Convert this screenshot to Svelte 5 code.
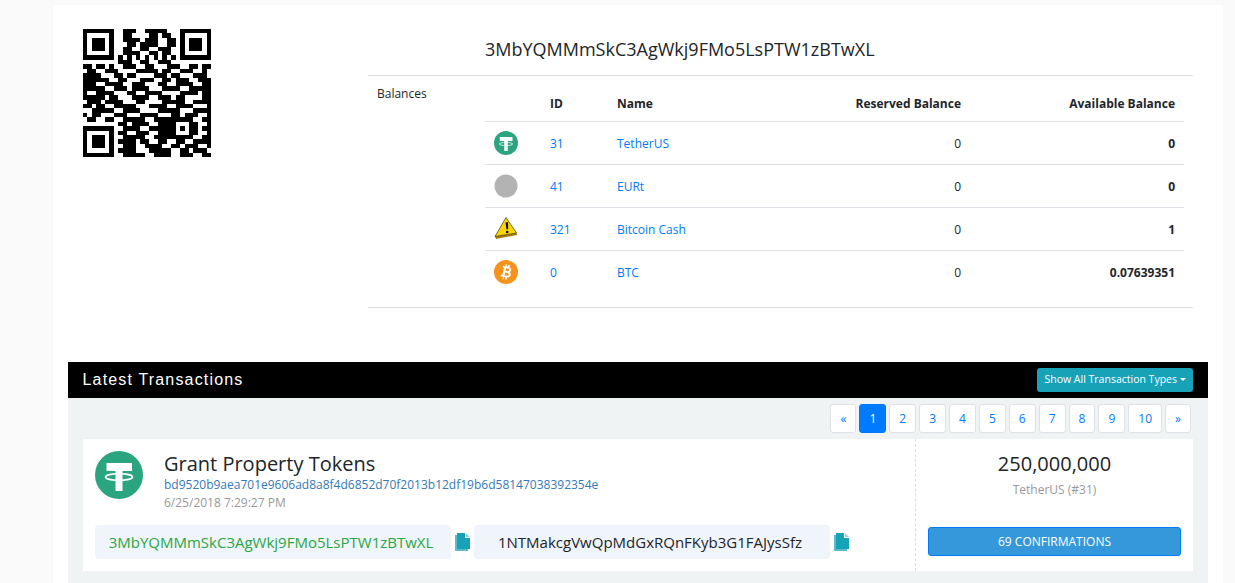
<script lang="ts">
  const rows = [
    { icon: 'tether', id: 31, name: 'TetherUS', reserved: '0', available: '0' },
    { icon: 'none', id: 41, name: 'EURt', reserved: '0', available: '0' },
    { icon: 'warn', id: 321, name: 'Bitcoin Cash', reserved: '0', available: '1' },
    { icon: 'btc', id: 0, name: 'BTC', reserved: '0', available: '0.07639351' }
  ];
  const pages = ['«', '1', '2', '3', '4', '5', '6', '7', '8', '9', '10', '»'];

  const qr = [
    '11111110011100111110001111111',
    '10000010011000011011001000001',
    '10111010011110111001101011101',
    '10111010001101111001101011101',
    '10111010011001100111001011101',
    '10000010011110011011001000001',
    '11111110101010101010101111111',
    '00000000111001100111000000000',
    '11011010011100110001110011011',
    '01100111000011111011001110010',
    '11110001101100001110110001110',
    '11111100110001110011011100111',
    '11100111100111000110011110011',
    '11111001110111100011110011111',
    '10011110001100111100001111011',
    '11111011000111100111011000011',
    '01110111100011000011111001111',
    '11011001111100011110011110001',
    '00111110011110000111110001111',
    '10110001110001111000110111001',
    '01100110011111001111111110011',
    '00000000110111100111100011001',
    '11111110011110011111101011011',
    '10000010110011100111100011001',
    '10111010011111001111111110011',
    '10111010111101100110011001111',
    '10111010011100111100110111001',
    '10000010111100011111001101110',
    '11111110011111001111001110011'
  ];
  const qrPath = qr
    .map((row, y) => [...row].map((c, x) => (c === '1' ? `M${x} ${y}h1v1h-1z` : '')).join(''))
    .join('');
</script>

{#snippet tether(size)}
  <svg width={size} height={size} viewBox="0 0 48 48">
    <circle cx="24" cy="24" r="24" fill="#2aa57f" />
    <path fill="#fff" d="M11.500 12h25.500v8h-9.500v20h-7V20h-9z" />
    <ellipse cx="24" cy="26" rx="13.500" ry="3.200" fill="none" stroke="#fff" stroke-width="1.500" />
  </svg>
{/snippet}

{#snippet copy()}
  <svg class="copy" width="15" height="18" viewBox="0 0 15 18">
    <path fill="#5dbccb" d="M0 2h2v14h11v2H0z" />
    <path fill="#17a2b8" d="M2 0h8v5h5v11H2z" />
    <path fill="#8fd6e1" d="M11 0l4 4h-4z" />
  </svg>
{/snippet}

<div class="sheet">
  <section class="info">
    <div class="qr-col">
      <svg class="qr" width="128" height="128" viewBox="0 0 29 29" shape-rendering="crispEdges">
        <path d={qrPath} fill="#000" />
      </svg>
    </div>
    <div class="detail">
      <h2 class="address">3MbYQMMmSkC3AgWkj9FMo5LsPTW1zBTwXL</h2>
      <div class="balances">
        <div class="balances__label">Balances</div>
        <table>
          <colgroup>
            <col style="width:56px" />
            <col style="width:67px" />
            <col style="width:181px" />
            <col style="width:181px" />
            <col style="width:214px" />
          </colgroup>
          <thead>
            <tr>
              <th></th>
              <th>ID</th>
              <th>Name</th>
              <th class="num">Reserved Balance</th>
              <th class="num">Available Balance</th>
            </tr>
          </thead>
          <tbody>
            {#each rows as row}
              <tr>
                <td class="icon-cell">
                  {#if row.icon === 'tether'}
                    {@render tether(24)}
                  {:else if row.icon === 'none'}
                    <svg width="24" height="24" viewBox="0 0 24 24"><circle cx="12" cy="12" r="11.500" fill="#b3b3b3" /></svg>
                  {:else if row.icon === 'warn'}
                    <svg width="24" height="24" viewBox="0 0 24 24">
                      <path fill="#a67c00" d="M1 19.500l1 2.500 21-4-.5-2z" />
                      <path fill="#ffd500" stroke="#3d3000" stroke-width=".7" d="M12 .5l10.500 15.500-21.500 3.500z" />
                      <path fill="#111" d="M11.500 5.500l2.500-.4.2 7-1.700.3z" />
                      <circle cx="13.200" cy="15" r="1.300" fill="#111" />
                    </svg>
                  {:else}
                    <svg width="24" height="24" viewBox="0 0 24 24">
                      <circle cx="12" cy="12" r="12" fill="#f7931a" />
                      <path transform="rotate(12 12 12)" fill="#fff" fill-rule="evenodd" d="M10 4.500h1.500v1.800h1.200V4.500h1.500v2c1.700.4 2.500 1.400 2.500 2.700 0 1-.5 1.800-1.300 2.200 1.200.4 1.900 1.300 1.900 2.600 0 1.900-1.300 3-3.100 3.200v2.300h-1.500v-2.200h-1.200v2.200H10v-2.200H7.500l.4-1.900h1.200V8.200H7.800V6.500H10zM11.400 8.200v2.700h1.900c.8 0 1.300-.6 1.300-1.400s-.5-1.300-1.300-1.300zM11.400 12.600v3h2.200c.9 0 1.500-.6 1.500-1.500s-.6-1.500-1.500-1.500z" />
                    </svg>
                  {/if}
                </td>
                <td><span class="link">{row.id}</span></td>
                <td><span class="link">{row.name}</span></td>
                <td class="num">{row.reserved}</td>
                <td class="num strong">{row.available}</td>
              </tr>
            {/each}
          </tbody>
        </table>
      </div>
    </div>
  </section>

  <section class="txs">
    <header class="txs__bar">
      <h3>Latest Transactions</h3>
      <button class="types">Show All Transaction Types<span class="caret"></span></button>
    </header>
    <div class="txs__body">
      <nav class="pager">
        {#each pages as p}
          <span class="page" class:active={p === '1'}>{p}</span>
        {/each}
      </nav>
      <article class="tx">
        <div class="tx__main">
          <div class="tx__head">
            {@render tether(48)}
            <div class="tx__meta">
              <div class="tx__title">Grant Property Tokens</div>
              <div class="tx__hash">bd9520b9aea701e9606ad8a8f4d6852d70f2013b12df19b6d58147038392354e</div>
              <div class="tx__date">6/25/2018 7:29:27 PM</div>
            </div>
          </div>
          <div class="tx__parties">
            <span class="pill pill--from">3MbYQMMmSkC3AgWkj9FMo5LsPTW1zBTwXL</span>
            {@render copy()}
            <span class="pill">1NTMakcgVwQpMdGxRQnFKyb3G1FAJysSfz</span>
            {@render copy()}
          </div>
        </div>
        <div class="tx__side">
          <div class="tx__amount">250,000,000</div>
          <div class="tx__asset">TetherUS (#31)</div>
          <div class="confirm">69 CONFIRMATIONS</div>
        </div>
      </article>
    </div>
  </section>
</div>

<style>
  :global(body) {
    background: #fafafa;
    font-family: "Open Sans", "Noto Sans", sans-serif;
    font-size: 12px;
    color: #212529;
    overflow: hidden;
  }

  .sheet {
    margin: 5px 12px 0 53px;
    height: 578px;
    background: #fff;
    padding: 0 15px;
  }

  .info {
    display: flex;
    height: 357px;
  }
  .qr-col {
    width: 300px;
    padding: 24px 0 0 15px;
    box-sizing: border-box;
  }
  .qr { display: block; }

  .detail {
    width: 825px;
    height: 303px;
    box-sizing: border-box;
    border-bottom: 1px solid #dee2e6;
  }
  .address {
    margin: 0;
    height: 71px;
    box-sizing: border-box;
    padding: 32px 0 0 117px;
    font-size: 18px;
    font-weight: 400;
    line-height: 24px;
    border-bottom: 1px solid #dee2e6;
  }

  .balances { display: flex; }
  .balances__label {
    width: 117px;
    padding: 9px 0 0 9px;
    box-sizing: border-box;
    line-height: 18px;
  }

  table {
    width: 699px;
    table-layout: fixed;
    border-collapse: collapse;
  }
  th {
    height: 45px;
    padding: 0 9px 9px;
    text-align: left;
    font-weight: 700;
    font-size: 12px;
    vertical-align: bottom;
    box-sizing: border-box;
  }
  td {
    height: 43px;
    padding: 2px 9px 0;
    box-sizing: border-box;
    border-top: 1px solid #dee2e6;
    vertical-align: middle;
  }
  td.icon-cell { padding: 0 9px; }
  .num { text-align: right; }
  .strong { font-weight: 700; }
  .icon-cell svg { display: block; }
  .link { color: #007bff; }

  .txs__bar {
    height: 36px;
    background: #000;
    display: flex;
    align-items: center;
    justify-content: space-between;
    padding: 0 15px 0 14.500px;
  }
  .txs__bar h3 {
    margin: 0;
    color: #fff;
    font-family: "Liberation Sans", Arial, sans-serif;
    font-size: 16px;
    font-weight: 400;
    letter-spacing: 1.170px;
  }
  .types {
    height: 24px;
    padding: 0 7px 2px;
    border: 0;
    border-radius: 3px;
    background: #17a2b8;
    color: #fff;
    font: 400 10.500px "Open Sans", sans-serif;
    display: flex;
    align-items: center;
  }
  .caret {
    margin-left: 3px;
    border-top: 3px solid #fff;
    border-left: 3px solid transparent;
    border-right: 3px solid transparent;
  }

  .txs__body {
    height: 185px;
    background: #eff3f4;
    padding: 6px 15px 0;
  }
  .pager {
    display: flex;
    justify-content: flex-end;
    gap: 3px;
    padding-right: 2px;
    height: 29px;
  }
  .page {
    padding: 0 9px;
    display: flex;
    align-items: center;
    background: #fff;
    border: 1px solid #dee2e6;
    border-radius: 3px;
    color: #007bff;
  }
  .page.active {
    background: #007bff;
    border-color: #007bff;
    color: #fff;
  }

  .tx {
    margin-top: 6px;
    height: 132px;
    display: flex;
    background: #fff;
  }
  .tx__main {
    width: 833px;
    box-sizing: border-box;
    padding: 12px 0 0 12px;
    border-right: 1px dashed #ddd;
  }
  .tx__head { display: flex; gap: 21px; }
  .tx__head svg { display: block; }
  .tx__title {
    font-size: 20px;
    line-height: 26px;
  }
  .tx__hash {
    color: #337ab7;
    font-size: 12px;
    line-height: 16px;
  }
  .tx__date {
    color: #999;
    font-size: 12px;
    line-height: 20px;
  }
  .tx__parties {
    margin-top: 12px;
    display: flex;
    align-items: center;
  }
  .pill {
    width: 356px;
    height: 34px;
    box-sizing: border-box;
    padding-right: 4px;
    display: flex;
    align-items: center;
    justify-content: center;
    background: #f0f4fb;
    border-radius: 4px;
    font-size: 15px;
  }
  .pill--from { color: #28a745; }
  .copy { margin: 0 4px; flex-shrink: 0; }

  .tx__side {
    flex: 1;
    padding: 0 12px;
    text-align: center;
  }
  .tx__amount {
    font-size: 20px;
    line-height: 26px;
    margin-top: 12px;
  }
  .tx__asset {
    color: #999;
    font-size: 12px;
    line-height: 18px;
    margin-top: 4px;
  }
  .confirm {
    margin-top: 28px;
    height: 29px;
    line-height: 27px;
    box-sizing: border-box;
    border: 1px solid #007bff;
    border-radius: 3px;
    background: #3498db;
    color: #fff;
  }
</style>
